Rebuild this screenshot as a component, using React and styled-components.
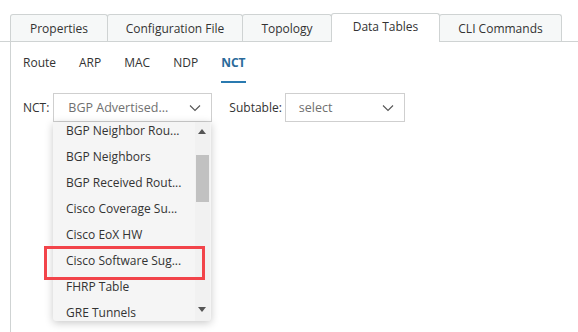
import React from "react";
import styled, { createGlobalStyle } from "styled-components";

const Global = createGlobalStyle`
  html, body { margin: 0; padding: 0; background: #fff; }
  body { font-family: "Open Sans", "Noto Sans", sans-serif; color: #333; }
  * { box-sizing: border-box; }
`;

const Page = styled.div`
  position: relative;
  width: 578px;
  height: 332px;
  overflow: hidden;
  padding-top: 13px;
`;

const TabStrip = styled.div`
  display: flex;
  align-items: flex-end;
  padding-left: 10px;
  height: 29px;
  border-bottom: 1px solid #cfd3d3;
`;

const Tab = styled.div`
  width: ${(p) => p.w}px;
  height: ${(p) => (p.active ? 29 : 27)}px;
  margin-bottom: ${(p) => (p.active ? -1 : 0)}px;
  margin-left: -1px;
  display: flex;
  align-items: center;
  justify-content: center;
  font-size: 12px;
  color: #333;
  background: ${(p) => (p.active ? "#fff" : "#f6f8f8")};
  border: 1px solid #cfd3d3;
  border-bottom: 0;
  border-radius: 3px 3px 0 0;
  &:first-child { margin-left: 0; }
  padding-bottom: ${(p) => (p.active ? 3 : 0)}px;
`;

const Panel = styled.div`
  margin-left: 10px;
  border-left: 1px solid #cfd3d3;
  height: 300px;
  padding-left: 12px;
`;

const SubTabs = styled.div`
  display: flex;
  height: 41px;
  align-items: stretch;
`;

const SubTab = styled.div`
  margin-right: ${(p) => p.mr || 0}px;
  font-size: 12px;
  display: flex;
  align-items: center;
  padding-top: 2px;
  font-weight: ${(p) => (p.active ? 700 : 400)};
  color: ${(p) => (p.active ? "#2a6a9a" : "#333")};
  border-bottom: 2px solid ${(p) => (p.active ? "#2a7ab0" : "transparent")};
  height: 41px;
`;

const FilterRow = styled.div`
  display: flex;
  align-items: center;
  margin-top: 10px;
  height: 29px;
`;

const Label = styled.span`
  font-size: 12px;
  color: #333;
  margin-right: ${(p) => p.mr}px;
`;

const Select = styled.div`
  width: ${(p) => p.w}px;
  height: 29px;
  border: 1px solid #cfcfcf;
  display: flex;
  align-items: center;
  justify-content: space-between;
  padding: 0 10px 0 ${(p) => p.pl}px;
  font-size: 12.5px;
  color: #707070;
  background: #fff;
  margin-right: ${(p) => p.mr || 0}px;
`;

const Chevron = () => (
  <svg width="12" height="8" viewBox="0 0 12 8">
    <path d="M1 1.5 L6 6.5 L11 1.5" fill="none" stroke="#555" strokeWidth="1.1" />
  </svg>
);

const Dropdown = styled.div`
  position: absolute;
  left: 53px;
  top: 122px;
  width: 158px;
  height: 199px;
  background: #f5f5f5;
  box-shadow: 0 2px 8px rgba(0, 0, 0, 0.22);
  border-radius: 0 0 3px 3px;
  overflow: hidden;
  display: flex;
`;

const List = styled.div`
  flex: 1;
  margin-top: -5px;
`;

const Item = styled.div`
  height: 26px;
  display: flex;
  align-items: center;
  padding-left: 13px;
  font-size: 12px;
  color: #333;
  white-space: nowrap;
`;

const ScrollBar = styled.div`
  width: 15px;
  margin-right: 1px;
  position: relative;
  background: #f1f1f1;
`;

const Arrow = styled.div`
  position: absolute;
  left: 3px;
  ${(p) => (p.up ? "top: 7px;" : "bottom: 9px;")}
  width: 0;
  height: 0;
  border-left: 4.5px solid transparent;
  border-right: 4.5px solid transparent;
  ${(p) => (p.up ? "border-bottom: 5px solid #555;" : "border-top: 5px solid #555;")}
`;

const Thumb = styled.div`
  position: absolute;
  left: 1px;
  right: 1px;
  top: 33px;
  height: 47px;
  background: #c1c1c1;
`;

const Highlight = styled.div`
  position: absolute;
  left: 44px;
  top: 246px;
  width: 161px;
  height: 34px;
  border: 3px solid #f2444a;
  pointer-events: none;
`;

const items = [
  "BGP Neighbor Rou...",
  "BGP Neighbors",
  "BGP Received Rout...",
  "Cisco Coverage Su...",
  "Cisco EoX HW",
  "Cisco Software Sug...",
  "FHRP Table",
  "GRE Tunnels",
];

export default function App() {
  return (
    <Page>
      <Global />
      <TabStrip>
        <Tab w={98}>Properties</Tab>
        <Tab w={136}>Configuration File</Tab>
        <Tab w={90}>Topology</Tab>
        <Tab w={109} active>Data Tables</Tab>
        <Tab w={123}>CLI Commands</Tab>
      </TabStrip>
      <Panel>
        <SubTabs>
          <SubTab mr={23}>Route</SubTab>
          <SubTab mr={23}>ARP</SubTab>
          <SubTab mr={23}>MAC</SubTab>
          <SubTab mr={23}>NDP</SubTab>
          <SubTab active>NCT</SubTab>
        </SubTabs>
        <FilterRow>
          <Label mr={4}>NCT:</Label>
          <Select w={159} pl={14} mr={17}>
            <span>BGP Advertised...</span>
            <Chevron />
          </Select>
          <Label mr={3}>Subtable:</Label>
          <Select w={120} pl={13}>
            <span>select</span>
            <Chevron />
          </Select>
        </FilterRow>
      </Panel>
      <Dropdown>
        <List>
          {items.map((t) => (
            <Item key={t}>{t}</Item>
          ))}
        </List>
        <ScrollBar>
          <Arrow up />
          <Thumb />
          <Arrow />
        </ScrollBar>
      </Dropdown>
      <Highlight />
    </Page>
  );
}
